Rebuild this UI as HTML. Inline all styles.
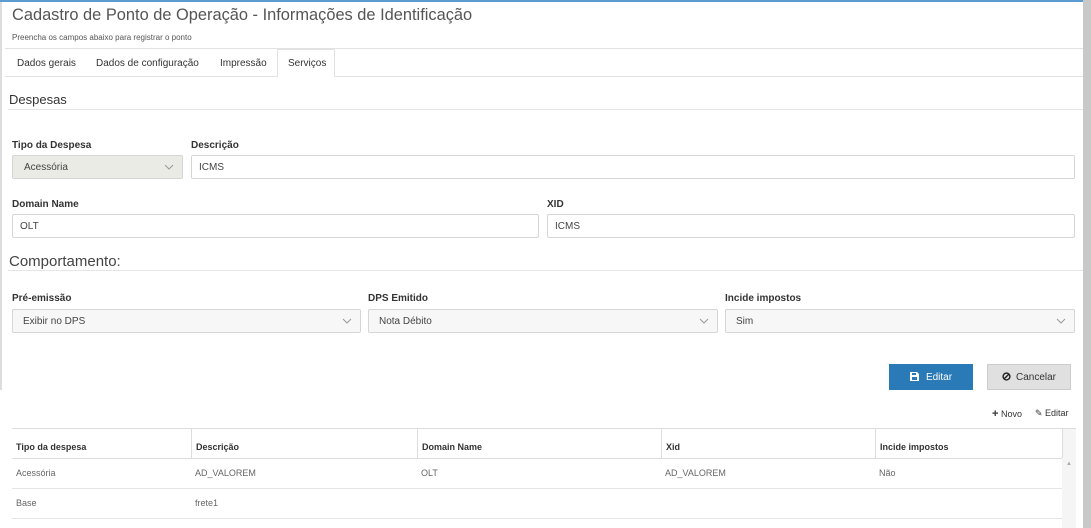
<!DOCTYPE html>
<html><head><meta charset="utf-8"><style>
*{box-sizing:border-box;margin:0;padding:0}
body{width:1091px;height:528px;overflow:hidden;background:#fff;font-family:"Liberation Sans",sans-serif;color:#333;position:relative}
.a{position:absolute}
.lbl{position:absolute;font-size:10px;font-weight:bold;color:#333}
.in{position:absolute;height:24px;border:1px solid #d6d6d6;border-radius:2px;font-size:10px;color:#444;padding:1px 7px 0;line-height:22px;background:#fff}
.sel{background:#f7f7f7;padding-left:10px}
.chev{position:absolute;right:8px;top:7px;width:10px;height:8px}
.th,.td{position:absolute;font-size:9px;line-height:30px;padding-left:4px}
.th{font-weight:bold;color:#333;top:432px}
.td{color:#666}
</style></head><body>
<div class="a" style="left:0;top:0;width:1083px;height:2px;background:#5b9bd1"></div>
<div class="a" style="left:0;top:2px;width:2px;height:388px;background:#ddd"></div>
<div class="a" style="left:1083px;top:0;width:8px;height:528px;background:#c8c8c8"></div>
<div class="a" style="left:12px;top:6px;font-size:16.4px;color:#555;white-space:nowrap">Cadastro de Ponto de Operação - Informações de Identificação</div>
<div class="a" style="left:12px;top:33px;font-size:8px;color:#555">Preencha os campos abaixo para registrar o ponto</div>
<div class="a" style="left:5px;top:48px;width:1078px;height:1px;background:#e2e2e2"></div>
<div class="a" style="left:5px;top:76px;width:1078px;height:1px;background:#e2e2e2"></div>
<div class="a" style="left:277px;top:49px;width:58px;height:28px;background:#fff;border:1px solid #e2e2e2;border-bottom:none"></div>
<div class="a" style="left:17px;top:58px;font-size:10px;color:#333">Dados gerais</div>
<div class="a" style="left:96px;top:58px;font-size:10px;color:#333">Dados de configuração</div>
<div class="a" style="left:220px;top:58px;font-size:10px;color:#333">Impressão</div>
<div class="a" style="left:288px;top:58px;font-size:10px;color:#333">Serviços</div>
<div class="a" style="left:9px;top:92px;font-size:13px;color:#333">Despesas</div>
<div class="a" style="left:8px;top:109px;width:1075px;height:1px;background:#e5e5e5"></div>

<div class="lbl" style="left:12px;top:140px">Tipo da Despesa</div>
<div class="in sel" style="left:12px;top:155px;width:171px;background:#ebebe6;padding-left:11px">Acessória<svg class="chev" viewBox="0 0 10 8"><path d="M1 2l4 4 4-4" fill="none" stroke="#999" stroke-width="1"/></svg></div>
<div class="lbl" style="left:191px;top:140px">Descrição</div>
<div class="in" style="left:191px;top:155px;width:884px">ICMS</div>

<div class="lbl" style="left:12px;top:199px">Domain Name</div>
<div class="in" style="left:12px;top:214px;width:527px">OLT</div>
<div class="lbl" style="left:547px;top:199px">XID</div>
<div class="in" style="left:547px;top:214px;width:528px">ICMS</div>

<div class="a" style="left:9px;top:253px;font-size:15px;color:#444">Comportamento:</div>
<div class="a" style="left:8px;top:270px;width:1075px;height:1px;background:#e5e5e5"></div>

<div class="lbl" style="left:12px;top:293px">Pré-emissão</div>
<div class="in sel" style="left:12px;top:309px;width:349px">Exibir no DPS<svg class="chev" viewBox="0 0 10 8"><path d="M1 2l4 4 4-4" fill="none" stroke="#999"/></svg></div>
<div class="lbl" style="left:368px;top:293px">DPS Emitido</div>
<div class="in sel" style="left:368px;top:309px;width:350px">Nota Débito<svg class="chev" viewBox="0 0 10 8"><path d="M1 2l4 4 4-4" fill="none" stroke="#999"/></svg></div>
<div class="lbl" style="left:725px;top:293px">Incide impostos</div>
<div class="in sel" style="left:725px;top:309px;width:350px">Sim<svg class="chev" viewBox="0 0 10 8"><path d="M1 2l4 4 4-4" fill="none" stroke="#999"/></svg></div>

<div class="a" style="left:889px;top:364px;width:84px;height:26px;background:#2a7ab8;color:#fff;font-size:10px;line-height:28px;text-align:center"><svg width="9" height="9" viewBox="0 0 9 9" style="vertical-align:-1px;margin-right:7px"><path d="M0 0h7l2 2v7H0z" fill="#fff"/><rect x="2" y="1" width="4" height="2" fill="#2a7ab8"/><rect x="2" y="5" width="5" height="3" fill="#2a7ab8"/></svg>Editar</div>
<div class="a" style="left:987px;top:364px;width:84px;height:26px;background:#e0e0e0;border:1px solid #ccc;color:#333;font-size:10px;line-height:26px;text-align:center"><svg width="9" height="9" viewBox="0 0 10 10" style="vertical-align:-1px;margin-right:5px"><circle cx="5" cy="5" r="3.8" fill="none" stroke="#222" stroke-width="1.6"/><path d="M2.5 7.5l5-5" stroke="#222" stroke-width="1.6"/></svg>Cancelar</div>

<div class="a" style="left:992px;top:408px;font-size:9px;color:#333"><b style="font-size:11px">+</b> Novo</div>
<div class="a" style="left:1035px;top:408px;font-size:9px;color:#333">&#x270E; Editar</div>

<div class="a" style="left:12px;top:428px;width:1064px;height:1px;background:#ddd"></div>
<div class="a" style="left:12px;top:458px;width:1050px;height:1px;background:#ddd"></div>
<div class="a" style="left:12px;top:488px;width:1050px;height:1px;background:#e5e5e5"></div>
<div class="a" style="left:12px;top:518px;width:1050px;height:1px;background:#e5e5e5"></div>
<div class="a" style="left:1062px;top:429px;width:14px;height:99px;background:#f5f5f5"></div>
<div class="a" style="left:1066px;top:461px;font-size:6px;color:#aaa">&#9650;</div>
<div class="a" style="left:191px;top:429px;width:1px;height:29px;background:#ddd"></div>
<div class="a" style="left:417px;top:429px;width:1px;height:29px;background:#ddd"></div>
<div class="a" style="left:661px;top:429px;width:1px;height:29px;background:#ddd"></div>
<div class="a" style="left:875px;top:429px;width:1px;height:29px;background:#ddd"></div>
<div class="a" style="left:1062px;top:429px;width:1px;height:29px;background:#ddd"></div>

<div class="th" style="left:12px">Tipo da despesa</div>
<div class="th" style="left:192px">Descrição</div>
<div class="th" style="left:418px">Domain Name</div>
<div class="th" style="left:662px">Xid</div>
<div class="th" style="left:876px">Incide impostos</div>

<div class="td" style="left:12px;top:458px">Acessória</div>
<div class="td" style="left:191px;top:458px">AD_VALOREM</div>
<div class="td" style="left:417px;top:458px">OLT</div>
<div class="td" style="left:661px;top:458px">AD_VALOREM</div>
<div class="td" style="left:875px;top:458px">Não</div>
<div class="td" style="left:12px;top:488px">Base</div>
<div class="td" style="left:191px;top:488px">frete1</div>
</body></html>
